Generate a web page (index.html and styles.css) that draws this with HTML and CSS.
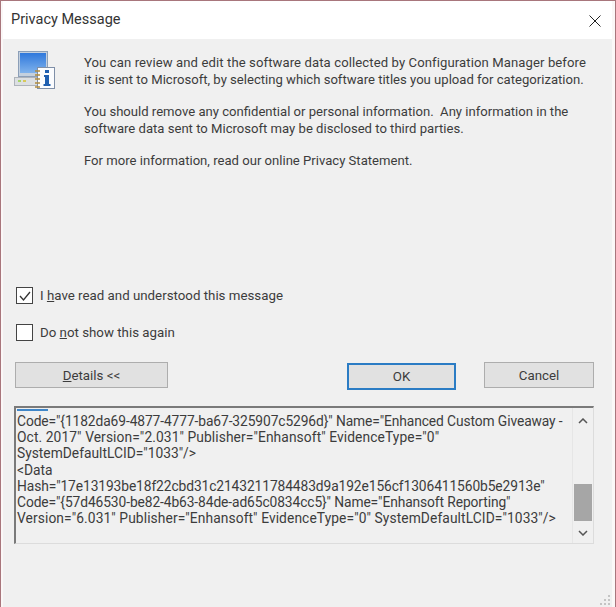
FILE: index.html
```html
<!DOCTYPE html>
<html lang="en">
<head>
    <meta charset="UTF-8">
    <title>Privacy Message</title>
    <link rel="stylesheet" href="styles.css">
</head>
<body>

<div class="window">
    <div class="titlebar">
        <span class="title">Privacy Message</span>
        <svg class="close" width="12" height="12" viewBox="0 0 12 12">
            <path d="M0.500 0.500L11.500 11.500M11.500 0.500L0.500 11.500" stroke="#222" stroke-width="1" fill="none"/>
        </svg>
    </div>

    <div class="content">
        <div class="message">
            <svg class="msg-icon" width="42" height="40" viewBox="0 0 42 40">
                <defs>
                    <linearGradient id="screen" x1="0" y1="0" x2="0" y2="1">
                        <stop offset="0" stop-color="#2f78dc"/>
                        <stop offset="1" stop-color="#7fb2ec"/>
                    </linearGradient>
                </defs>
                <rect x="4.500" y="0.500" width="29" height="25" fill="#c4d0de" stroke="#8c9fb8"/>
                <rect x="6" y="2" width="26" height="20" fill="url(#screen)"/>
                <rect x="0.500" y="26.500" width="24" height="8" fill="#dcdfe2" stroke="#aeb3ba"/>
                <rect x="4" y="29" width="3" height="2" fill="#a7d46a"/>
                <rect x="9" y="29" width="3" height="2" fill="#d8c95a"/>
                <rect x="23.500" y="16.500" width="17" height="21" fill="#fbfcfe" stroke="#7f8fa8"/>
                <path d="M21 20h5M21 24h5M21 28h5M21 32h5M21 36h5" stroke="#b08a3c" stroke-width="1.500"/>
                <rect x="31" y="19" width="4" height="3" fill="#1f5fb0"/>
                <path d="M30 24h5v9h1.500v2h-7v-2h1.500v-7h-1z" fill="#1f5fb0"/>
            </svg>
            <div class="msg-text">
                <p><span class="msg-first">You can review and edit the software data collected by Configuration Manager before</span><br>it is sent to Microsoft, by selecting which software titles you upload for categorization.</p>
                <p>You should remove any confidential or personal information.&nbsp; Any information in the<br>software data sent to Microsoft may be disclosed to third parties.</p>
                <p>For more information, read our online Privacy Statement.</p>
            </div>
        </div>

        <div class="checks">
            <label class="check">
                <span class="box">
                    <svg width="14" height="14" viewBox="0 0 14 14"><path d="M2 7l3.500 4L12 3" stroke="#333" stroke-width="1.300" fill="none"/></svg>
                </span>
                <span>I <u>h</u>ave read and understood this message</span>
            </label>
            <label class="check">
                <span class="box"></span>
                <span>Do <u>n</u>ot show this again</span>
            </label>
        </div>

        <div class="buttons">
            <button class="btn btn-details"><u>D</u>etails &lt;&lt;</button>
            <button class="btn btn-default">OK</button>
            <button class="btn">Cancel</button>
        </div>

        <div class="details">
            <div class="details-text">
                <span class="sel-mark"></span>
                <div class="line-narrow">Code="{1182da69-4877-4777-ba67-325907c5296d}" Name="Enhanced Custom Giveaway -</div>
                <div class="line-wide">Oct. 2017" Version="2.031" Publisher="Enhansoft" EvidenceType="0"</div>
                <div>SystemDefaultLCID="1033"/&gt;</div>
                <div>&lt;Data</div>
                <div class="line-narrow">Hash="17e13193be18f22cbd31c2143211784483d9a192e156cf1306411560b5e2913e"</div>
                <div class="line-narrow">Code="{57d46530-be82-4b63-84de-ad65c0834cc5}" Name="Enhansoft Reporting"</div>
                <div class="line-wide">Version="6.031" Publisher="Enhansoft" EvidenceType="0" SystemDefaultLCID="1033"/&gt;</div>
            </div>
            <div class="scrollbar">
                <svg width="10" height="6" viewBox="0 0 10 6"><path d="M1 5l4-4 4 4" stroke="#555" stroke-width="1.500" fill="none"/></svg>
                <div class="thumb"></div>
                <svg width="10" height="6" viewBox="0 0 10 6"><path d="M1 1l4 4 4-4" stroke="#555" stroke-width="1.500" fill="none"/></svg>
            </div>
        </div>
    </div>

    <svg class="grip" width="12" height="12" viewBox="0 0 12 12">
        <path d="M9 1h2v2H9zM5 5h2v2H5zM9 5h2v2H9zM1 9h2v2H1zM5 9h2v2H5zM9 9h2v2H9z" fill="#c4c4c4"/>
    </svg>
</div>

</body>
</html>
```

FILE: styles.css
```css
* {
    box-sizing: border-box;
}
body {
    margin: 0;
    background: #f0f0f0;
    font-family: Roboto, "Liberation Sans", Arial, sans-serif;
    font-size: 13.300px;
    color: #3c3c3c;
}
.window {
    position: relative;
    width: 616px;
    height: 607px;
    background: #fbf7f7;
    border: 1px solid #a8767c;
    border-bottom: none;
    padding: 0 3px 0 2px;
    overflow: hidden;
}
.titlebar {
    height: 38px;
    background: white;
    display: flex;
    align-items: center;
    justify-content: space-between;
    padding: 0 11px 0 8px;
}
.title {
    font-size: 14.500px;
    color: #333;
    margin-bottom: 2px;
}
.close {
    margin-top: 1px;
}
.content {
    height: 568px;
    background: #f0f0f0;
    padding: 0 18px 0 11px;
}
.message {
    display: flex;
    gap: 28px;
    padding-top: 15px;
    height: 248px;
}
.msg-icon {
    flex: none;
    margin-top: -3px;
}
.msg-text {
    font-size: 13.100px;
}
.msg-text p {
    margin: 0 0 15px;
    line-height: 17px;
    white-space: nowrap;
}
.msg-first {
    letter-spacing: 0.100px;
}
.checks {
    display: flex;
    flex-direction: column;
    gap: 20px;
    padding-left: 2px;
}
.check {
    display: flex;
    align-items: center;
    gap: 7px;
    height: 17px;
}
.box {
    width: 17px;
    height: 17px;
    background: white;
    border: 1px solid #444;
    display: flex;
    align-items: center;
    justify-content: center;
}
.buttons {
    display: flex;
    margin-top: 21px;
    padding-left: 1px;
    align-items: flex-start;
}
.btn {
    width: 110px;
    height: 26px;
    background: #e1e1e1;
    border: 1px solid #adadad;
    font-family: inherit;
    font-size: inherit;
    color: #3c3c3c;
    padding: 0;
}
.btn-details {
    width: 153px;
    margin-right: 179px;
}
.btn-default {
    width: 109px;
    height: 27px;
    margin-right: 28px;
    margin-top: 1px;
    border: 2px solid #2b7cc4;
}
.details {
    display: flex;
    height: 138px;
    width: 580px;
    margin-top: 16px;
    border: 1px solid #dcdcdc;
    border-top: 2px solid #7a7a7a;
    border-left: 2px solid #7a7a7a;
}
.details-text {
    position: relative;
    flex: 1;
    padding: 5px 0 0 1px;
    font-size: 13.800px;
    line-height: 16.200px;
    white-space: nowrap;
    overflow: hidden;
}
.line-wide {
    letter-spacing: 0.090px;
}
.line-narrow {
    letter-spacing: -0.100px;
}
.sel-mark {
    position: absolute;
    left: 1px;
    top: 1px;
    width: 31px;
    height: 2px;
    background: #3f86c8;
}
.scrollbar {
    flex: none;
    width: 21px;
    display: flex;
    flex-direction: column;
    align-items: center;
    padding-top: 10px;
    border-left: 1px solid #e6e6e6;
}
.thumb {
    width: 18px;
    height: 37px;
    margin-top: 60px;
    margin-bottom: 9px;
    background: #a6a6a6;
}
.grip {
    position: absolute;
    right: 4px;
    bottom: 1px;
}
```
